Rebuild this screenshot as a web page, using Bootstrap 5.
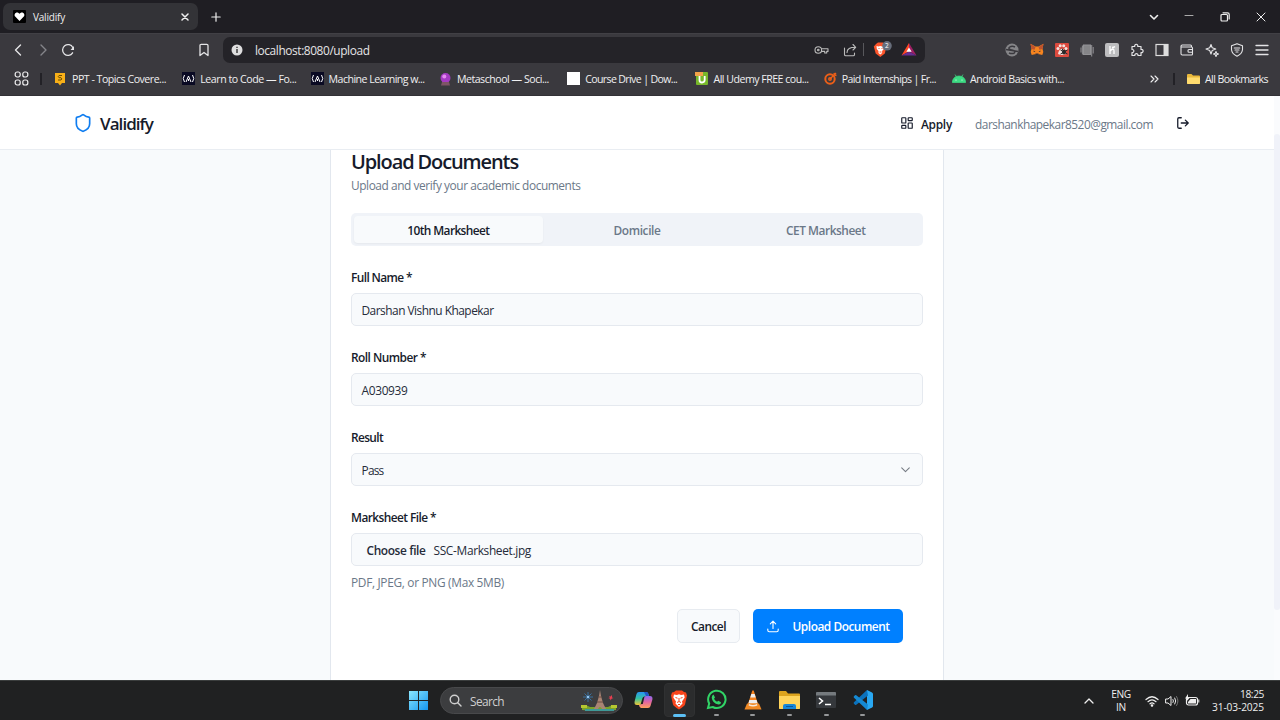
<!DOCTYPE html>
<html lang="en">
<head>
<meta charset="utf-8">
<meta name="viewport" content="width=device-width, initial-scale=1">
<title>Validify</title>
<link href="https://cdn.jsdelivr.net/npm/bootstrap@5.3.0/dist/css/bootstrap.min.css" rel="stylesheet">
<style>
body{font-family:"Open Sans","Noto Sans",sans-serif;font-size:11.9px;line-height:16px;color:#161b2b;background:#f8fafc;width:1280px;height:720px;overflow:hidden}
svg{display:block;flex:none}
.fit{white-space:nowrap;display:inline-block;flex:none}
.ln{fill:none;stroke:currentColor;stroke-linecap:round;stroke-linejoin:round}
/* browser chrome */
.tabstrip{height:33px;background:#1f1e23;color:#eee;padding-left:3px}
.btab{width:195px;height:27px;background:#333337;border-radius:7px;padding:0 9px 0 10px;font-size:10px}
.tabname{margin-left:7px}
.newtab{margin-left:13px}
.winctl{gap:26px;padding-right:14px}
.toolbar{height:32px;background:#3a393e;color:#e4e4e6;border-top:1px solid #414045}
.navset{padding-left:5px}
.navi{width:25px}
.urlbar{width:702px;height:26px;background:#242328;border-radius:7px;padding:0 8px;margin-left:13px;font-size:11.9px}
.ext{padding-right:6px}
.ext>*{width:25px;display:flex;justify-content:center;align-items:center}
.bookbar{height:31px;background:#3a393e;color:#f0f0f1;padding:0 12px 3px 14px;border-bottom:1px solid #323136;font-size:10.6px}
.bm{width:128.3px;gap:5px}
.vsep{width:2px;height:12px;background:#222126}
/* application */
.appnav{height:54px;width:1274px;background:#fff;border-bottom:1px solid #e9edf2;padding:0 84px 0 73px}
.appnav .fit{position:relative;top:1px}
.brandname{font-size:17px;font-weight:550}
.muted{color:#6b7888}
.main-area{height:530px}
.sheet{width:614px;height:530px;background:#fff;border:1px solid #e2e7ee;border-width:0 1px;margin-left:330px;padding:0 20px}
.sheet h1{font-size:20px;font-weight:600;line-height:24px;margin:0;height:26px}
.seg{height:33px;background:#f0f3f8;border-radius:5px;padding:3px;margin-top:18px;font-weight:600}
.seg>div{flex:1;height:27px;border-radius:4px;display:flex;align-items:center;justify-content:center;color:#6b7888}
.seg>.on{background:#f8fafc;color:#161b2b;box-shadow:0 1px 2px #0000000c}
.field{height:80px}
.field label{font-weight:600;display:block;height:24px}
.box{height:33px;border:1px solid #e5e9ef;border-radius:5px;background:#f8fafc;display:flex;align-items:center;padding:0 10px 0 9.5px;color:#252b39}
.act{height:34px;border-radius:5px;font-weight:600;display:flex;align-items:center;justify-content:center}
.cancel{width:63px;background:#f8fafc;border:1px solid #e7ebf0}
.upload{width:150px;background:#0080ff;color:#fff;gap:14px}
.side-track{width:6px;background:#fafbfd}
.side-thumb{height:476px;margin-top:38px;background:#f0f2f9;border-radius:3px}
/* taskbar */
.taskbar{height:40px;background:#202122;border-top:1px solid #3a3d3d;color:#eee}
.srch{width:183px;height:27px;background:#3c3d3f;border:1px solid #48494b;border-radius:14px;margin-left:12px;padding:0 4px 0 8px;color:#cfcfcf}
.apps{margin-left:11px}
.app{width:36.7px;height:39px;position:relative;display:flex;align-items:center;justify-content:center}
.app::after{content:"";position:absolute;bottom:4px;width:5px;height:2px;border-radius:2px;background:#96989a}
.app.idle::after{display:none}
.app.live::after{width:13px;height:3px;bottom:3px;background:#5cc0f5}
.app.live::before{content:"";position:absolute;left:3px;top:2px;width:31px;height:34px;background:#2b2c2d;border:1px solid #303132;border-radius:4px}
.app svg{position:relative;top:-1px}
.tray{font-size:10.2px;line-height:13px;padding-right:16px}
</style>
</head>
<body class="d-flex flex-column">

<header>
  <div class="tabstrip d-flex align-items-center">
    <div class="btab d-flex align-items-center">
      <svg width="13" height="13" viewBox="0 0 13 13"><rect width="13" height="13" rx="1" fill="#000"/><path d="M6.500 11 2.200 6.600C.5 4.600 2.800 1.600 5.200 2.800L6.500 3.800 7.800 2.800C10.200 1.600 12.500 4.600 10.800 6.600Z" fill="#fff"/></svg>
      <span class="fit tabname" data-w="32">Validify</span>
      <svg class="ms-auto ln" width="8" height="8" viewBox="0 0 8 8" stroke-width="1.5"><path d="M1 1l6 6M7 1 1 7"/></svg>
    </div>
    <svg class="newtab ln" width="10" height="10" viewBox="0 0 10 10" stroke-width="1.2"><path d="M5 .8v8.400M.8 5h8.400"/></svg>
    <div class="winctl d-flex align-items-center ms-auto">
      <svg class="ln" width="10" height="10" viewBox="0 0 10 10" stroke-width="1.600" style="margin-right:-1px"><path d="M1.500 3.500 5 7l3.500-3.500"/></svg>
      <svg class="ln" width="10" height="10" viewBox="0 0 10 10" stroke-width="1" color="#aaa"><path d="M1 3.500h8"/></svg>
      <svg class="ln" width="10" height="10" viewBox="0 0 10 10" stroke-width="1.200"><rect x="1" y="2.500" width="6.500" height="6.500" rx="1"/><path d="M3 .8h4.500Q9.200.8 9.200 2.500V7"/></svg>
      <svg class="ln" width="10" height="10" viewBox="0 0 10 10" stroke-width="1"><path d="m1 1 8 8M9 1 1 9"/></svg>
    </div>
  </div>

  <div class="toolbar d-flex align-items-center">
    <div class="navset d-flex">
      <div class="navi d-flex justify-content-center"><svg class="ln" width="12" height="14" viewBox="0 0 12 14" stroke-width="1.400"><path d="M8.500 2 3.500 7l5 5"/></svg></div>
      <div class="navi d-flex justify-content-center" style="color:#85858a"><svg class="ln" width="12" height="14" viewBox="0 0 12 14" stroke-width="1.400"><path d="m4 2 5 5-5 5"/></svg></div>
      <div class="navi d-flex justify-content-center"><svg class="ln" width="14" height="14" viewBox="0 0 14 14" stroke-width="1.300"><path d="M11.600 9.800A5.400 5.400 0 1 1 11.800 4.500"/><path d="M13 3v4H9.500Z" fill="currentColor" stroke="none"/></svg></div>
    </div>
    <svg class="ln" width="12" height="14" viewBox="0 0 12 14" stroke-width="1.300" style="margin-left:118px"><path d="M2 2.500Q2 1.300 3.200 1.300h5.600Q10 1.300 10 2.500v10L6 9.500l-4 3Z"/></svg>
    <div class="urlbar d-flex align-items-center">
      <svg width="12" height="12" viewBox="0 0 12 12"><circle cx="6" cy="6" r="5.500" fill="#dededf"/><path d="M6 5v4M6 2.700v1.300" stroke="#333" stroke-width="1.400"/></svg>
      <span class="fit" style="margin-left:12px" data-w="114.500">localhost:8080/upload</span>
      <div class="d-flex align-items-center ms-auto">
        <svg class="ln" width="15" height="10" viewBox="0 0 15 10" stroke-width="1.100" style="color:#bbb"><circle cx="4.300" cy="5" r="3.300"/><circle cx="4.300" cy="5" r=".8"/><path d="M7.500 3.800H14v2.600h-1.300V8h-2V6.400H7.500"/></svg>
        <svg class="ln" width="14" height="14" viewBox="0 0 14 14" stroke-width="1.100" style="margin-left:14px;color:#bbb"><path d="M1.500 5v6.500q0 1.300 1.300 1.300h7.400q1.300 0 1.300-1.300V10M4 9.500C4 5.500 7 4.300 12.500 4.300M10 1.500l2.700 2.800L10 7"/></svg>
        <div style="width:1px;height:13px;background:#58585c;margin:0 9px 0 6px"></div>
        <svg width="20" height="17" viewBox="0 0 20 17"><path d="m3 3 2-1.500h5L12 3l1.500 2.500-1.700 7L7.300 16 2.700 12.500.8 5.500Z" fill="#fb542b"/><path d="m3.500 5 2 .5L7.300 5l2 .5 2-.5-.5 3-1.700 2v2l-1.800 1.500L5.500 12v-2L3.800 8Z" fill="#fff"/><path d="m5.500 7 1 1m3-1-1 1m-2 3h2" stroke="#fb542b"/><circle cx="14" cy="4.800" r="4.800" fill="#676d7b"/><text x="12" y="7.300" font-size="6.500" fill="#fff">2</text></svg>
        <svg width="16" height="13" viewBox="0 0 16 13" style="margin-left:8px"><path d="M8 0 .5 12.500 8 8.500Z" fill="#ff4724"/><path d="m8 0 7.500 12.500L8 8.500Z" fill="#9e1f63"/><path d="M.5 12.500h15L8 8.500Z" fill="#662d91"/><path d="m8 4.500 2.700 4.300H5.300Z" fill="#fff"/></svg>
      </div>
    </div>
    <div class="ext d-flex ms-auto">
      <span><svg width="14" height="14" viewBox="0 0 14 14"><circle cx="7" cy="7" r="6.500" fill="#858588"/><path d="M10 4Q7 2.500 4.800 4T6 6.800l3 .8Q10.500 9 9 10.200 6.500 11.200 4 9.800M1 6.500l12 2" fill="none" stroke="#3a393e" stroke-width="1.500"/></svg></span>
      <span><svg width="14" height="13" viewBox="0 0 14 13"><path d="m.5.8 5 2.700h3l5-2.700-1 5 .8 3.200-1 3-3-.8-1.300.8H6l-1.300-.8-3 .8-1-3 .8-3.200Z" fill="#f5841f"/><path d="m.5.8 5 3.200-1 2.700-3-.8ZM13.500.8l-5 3.200 1 2.700 3-.8Z" fill="#bd532e"/><path d="m3.500 7.500 2 1.200-1.700.4Zm7 0-2 1.200 1.700.4ZM5.500 10.500h3l.3 1.500H5.200Z" fill="#33313b"/></svg></span>
      <span><svg width="14" height="14" viewBox="0 0 14 14"><rect width="14" height="14" rx="1" fill="#dc4a3e"/><g fill="#f3e3df"><circle cx="3" cy="5.500" r="1.500"/><circle cx="5.200" cy="2.700" r="1.500"/><circle cx="8.700" cy="2.700" r="1.500"/><circle cx="11" cy="5.500" r="1.500"/><path d="M7 5.500q3.500 1 4 5.500-4 2-8 0 .5-4.500 4-5.500"/></g><ellipse cx="9" cy="9" rx="2" ry="2.500" fill="#292929"/><path d="m5.500 7 7 4m0-4-7 4M7 5.500l1 2" stroke="#292929"/></svg></span>
      <span><svg width="14" height="14" viewBox="0 0 14 14" fill="none" stroke="#929295"><rect x="3.500" y="2" width="7" height="9.500" fill="#858588"/><path d="M1 4.500v5M2.400 2.500v9M11.700 2v11.500M13.200 4v6.500"/></svg></span>
      <span><svg width="14" height="14" viewBox="0 0 14 14"><rect width="14" height="14" rx="2" fill="#bdbdbf"/><path d="M5 3v8M5 8q4-4 4 0v3M7 4.500q2 0 3-1" fill="none" stroke="#fff" stroke-width="1.300"/></svg></span>
      <span><svg class="ln" width="14" height="14" viewBox="0 0 14 14" stroke-width="1.200"><path d="M2 3.500h2.700c-.5-3 3.600-3 3.100 0h3.200v3c2.800-.5 2.800 3.500 0 3v3H8c.3-2.500-3.500-2.500-3.200 0H2v-3c2.500.3 2.500-3.300 0-3Z"/></svg></span>
      <span><svg width="14" height="14" viewBox="0 0 14 14"><rect x="1" y="1.500" width="12" height="11" fill="none" stroke="#ddd" stroke-width="1.200"/><path d="M8.500 1.500H13v11H8.500Z" fill="#ddd"/></svg></span>
      <span><svg class="ln" width="14" height="14" viewBox="0 0 14 14" stroke-width="1.100"><path d="M11.500 4V3q0-1-1-1H2.300Q1 2 1 3.200v7.600Q1 12 2.300 12h9.200q1 0 1-1V5q0-1-1-1H1.200M12.500 6.500H9q-1 0-1 1v.8q0 1 1 1h3.500"/></svg></span>
      <span><svg class="ln" width="14" height="14" viewBox="0 0 14 14" stroke-width="1.100"><path d="m6 1.500 1.200 3.300L10.700 6 7.200 7.500 6 11 4.700 7.500 1 6l3.700-1.200ZM11 8.500l.7 1.800 1.800.7-1.800.7-.7 1.800-.7-1.800-1.800-.7 1.800-.7Z"/></svg></span>
      <span><svg class="ln" width="14" height="14" viewBox="0 0 14 14" stroke-width="1.100"><path d="m7 .8 5.500 2v4Q12 11 7 13.300 2 11 1.500 6.800v-4Z"/><path d="M4.300 5h5.400M5 7h4M6 9h2"/></svg></span>
      <span><svg class="ln" width="14" height="14" viewBox="0 0 14 14" stroke-width="1.300"><path d="M1 2.500h12M1 7h12M1 11.500h12"/></svg></span>
    </div>
  </div>

  <div class="bookbar d-flex align-items-center">
    <svg class="ln" width="15" height="15" viewBox="0 0 15 15" stroke-width="1.200"><rect x="1.200" y="1" width="5" height="5" rx="2"/><rect x="8.800" y="1" width="5" height="5" rx="2"/><rect x="1.200" y="9" width="5" height="5" rx="2"/><rect x="8.800" y="9" width="5" height="5" rx="2"/></svg>
    <div class="vsep" style="margin:0 12px 0 11px"></div>
    <div class="bm d-flex align-items-center"><svg width="12" height="14" viewBox="0 0 12 14"><path d="M1 1h10v10H8l-2 2.500L4 11H1Z" fill="#f8b018"/><path d="M8 3.500H5q-1.500 1.200 0 2.200h2q1.500 1.200 0 2.300H4" fill="none" stroke="#6b4a00"/></svg><span class="fit" data-w="94" style="margin-left:1px">PPT - Topics Covere...</span></div>
    <div class="bm d-flex align-items-center"><svg width="13" height="13" viewBox="0 0 13 13"><rect width="13" height="13" fill="#0a0a23"/><path d="M2.500 3Q0 6.500 2.500 10M10.500 3q2.500 3.500 0 7M4 10l2.500-6L9 10M6.500 7v2" fill="none" stroke="#fff"/></svg><span class="fit" data-w="96">Learn to Code — Fo...</span></div>
    <div class="bm d-flex align-items-center"><svg width="13" height="13" viewBox="0 0 13 13"><rect width="13" height="13" fill="#0a0a23"/><path d="M2.500 3Q0 6.500 2.500 10M10.500 3q2.500 3.500 0 7M4 10l2.500-6L9 10M6.500 7v2" fill="none" stroke="#fff"/></svg><span class="fit" data-w="96">Machine Learning w...</span></div>
    <div class="bm d-flex align-items-center"><svg width="13" height="14" viewBox="0 0 13 14"><circle cx="6.500" cy="6" r="5" fill="#a53bc4"/><circle cx="5.300" cy="4.500" r="2" fill="#e58af2"/><path d="M3 10h7l1 3.500H2Z" fill="#7e5566"/></svg><span class="fit" data-w="92">Metaschool — Soci...</span></div>
    <div class="bm d-flex align-items-center"><svg width="13" height="13"><rect width="13" height="13" fill="#fff"/></svg><span class="fit" data-w="92">Course Drive | Dow...</span></div>
    <div class="bm d-flex align-items-center"><svg width="13" height="13" viewBox="0 0 13 13"><rect x="1" width="12" height="13" rx="1" fill="#77b82a"/><path d="M4.500 4v4q0 2.500 2.500 2.500T9.700 8V4" fill="none" stroke="#fff" stroke-width="1.800"/><path d="M0 0h8v4H0Z" fill="#f3a24a"/></svg><span class="fit" data-w="95">All Udemy FREE cou...</span></div>
    <div class="bm d-flex align-items-center"><svg width="13" height="13" viewBox="0 0 13 13" fill="none" stroke="#ec5f18"><circle cx="6" cy="7" r="4.700" stroke-width="2"/><circle cx="6" cy="7" r="1.200" stroke-width="1.500"/><path d="m6 7 6-6M10 1l.5 2 2 .5" stroke-width="1.400"/></svg><span class="fit" data-w="94">Paid Internships | Fr...</span></div>
    <div class="bm d-flex align-items-center"><svg width="14" height="13" viewBox="0 0 14 13"><path d="M.3 10.500Q1 4 7 4t6.700 6.500ZM3 2.500 4.500 5M11 2.500 9.500 5" fill="#3ddc84" stroke="#3ddc84" stroke-width=".7"/><circle cx="4" cy="8" r=".6" fill="#fff"/><circle cx="10" cy="8" r=".6" fill="#fff"/></svg><span class="fit" data-w="94" style="margin-left:-1px">Android Basics with...</span></div>
    <div class="d-flex align-items-center ms-auto">
      <svg class="ln" width="9" height="8" viewBox="0 0 9 8" stroke-width="1.100"><path d="m1 1 3 3-3 3M5 1l3 3-3 3"/></svg>
      <div class="vsep" style="margin:0 12px 0 14px"></div>
      <svg width="13" height="12" viewBox="0 0 13 12"><path d="M0 2q0-1 1-1h3.500L6 2.500h6q1 0 1 1V10q0 1-1 1H1q-1 0-1-1Z" fill="#e9b83b"/><path d="M0 4.500h13V10q0 1-1 1H1q-1 0-1-1Z" fill="#ffdb6e"/></svg>
      <span class="fit" data-w="63" style="margin-left:5px">All Bookmarks</span>
    </div>
  </div>
</header>

<div class="d-flex">
  <div style="width:1274px">
    <nav class="appnav d-flex align-items-center">
      <svg class="ln" width="20" height="20" viewBox="0 0 24 24" stroke-width="2" style="color:#0f7df0"><path d="M20 13c0 5-3.500 7.500-7.660 8.950a1 1 0 0 1-.67-.01C7.500 20.500 4 18 4 13V6a1 1 0 0 1 1-1c2 0 4.500-1.200 6.240-2.720a1.170 1.170 0 0 1 1.520 0C14.510 3.810 17 5 19 5a1 1 0 0 1 1 1z"/></svg>
      <span class="fit brandname" data-w="53" style="margin-left:7px">Validify</span>
      <div class="d-flex align-items-center ms-auto">
        <svg class="ln" width="14" height="14" viewBox="0 0 24 24" stroke-width="2"><rect width="7" height="9" x="3" y="3" rx="1"/><rect width="7" height="5" x="14" y="3" rx="1"/><rect width="7" height="9" x="14" y="12" rx="1"/><rect width="7" height="5" x="3" y="16" rx="1"/></svg>
        <span class="fit fw-semibold" data-w="31" style="margin-left:7px">Apply</span>
        <span class="fit muted" data-w="178" style="margin-left:23px">darshankhapekar8520@gmail.com</span>
        <svg class="ln" width="14" height="14" viewBox="0 0 24 24" stroke-width="2.200" style="margin-left:23px"><path d="M9 21H5a2 2 0 0 1-2-2V5a2 2 0 0 1 2-2h4M16 17l5-5-5-5M21 12H9"/></svg>
      </div>
    </nav>
    <main class="main-area">
      <section class="sheet">
        <h1><span class="fit" data-w="167">Upload Documents</span></h1>
        <div class="muted" style="height:19px;padding-top:1px"><span class="fit" data-w="229.500">Upload and verify your academic documents</span></div>
        <div class="seg d-flex">
          <div class="on"><span class="fit" data-w="82">10th Marksheet</span></div>
          <div><span class="fit" data-w="47">Domicile</span></div>
          <div><span class="fit" data-w="79.500">CET Marksheet</span></div>
        </div>
        <form style="margin-top:23px">
          <div class="field"><label><span class="fit" data-w="61">Full Name *</span></label><div class="box"><span class="fit" data-w="132">Darshan Vishnu Khapekar</span></div></div>
          <div class="field"><label><span class="fit" data-w="75">Roll Number *</span></label><div class="box"><span class="fit" data-w="46">A030939</span></div></div>
          <div class="field"><label><span class="fit" data-w="32">Result</span></label><div class="box"><span class="fit" data-w="22">Pass</span><svg class="ln ms-auto" width="13" height="13" viewBox="0 0 24 24" stroke-width="2" style="color:#777c85"><path d="m5 9 7 7 7-7"/></svg></div></div>
          <div class="field"><label><span class="fit" data-w="85">Marksheet File *</span></label><div class="box"><span class="fit fw-semibold" data-w="59" style="margin-left:5px">Choose file</span><span class="fit" data-w="97.500" style="margin-left:8px">SSC-Marksheet.jpg</span></div></div>
          <div class="muted" style="height:20px;margin-top:-15px"><span class="fit" data-w="153">PDF, JPEG, or PNG (Max 5MB)</span></div>
          <div class="d-flex justify-content-end" style="padding:15px 20px 0 0;gap:13px">
            <div class="act cancel"><span class="fit" data-w="35">Cancel</span></div>
            <div class="act upload"><svg class="ln" width="12" height="13" viewBox="0 0 12 13" stroke-width="1.100"><path d="M6 8.500V1.200M3.300 3.800 6 1.200l2.700 2.600M.8 9v1.300q0 1.500 1.500 1.500h7.400q1.500 0 1.500-1.500V9"/></svg><span class="fit" data-w="97">Upload Document</span></div>
          </div>
        </form>
      </section>
    </main>
  </div>
  <div class="side-track"><div class="side-thumb"></div></div>
</div>

<footer class="taskbar d-flex align-items-center">
  <svg width="19" height="19" viewBox="0 0 19 19" style="margin-left:409px"><defs><linearGradient id="wg" x2="1" y2="1"><stop stop-color="#8ae7ff"/><stop offset="1" stop-color="#1496f0"/></linearGradient></defs><path d="M0 0h9v9H0ZM10 0h9v9h-9ZM0 10h9v9H0ZM10 10h9v9h-9Z" fill="url(#wg)"/></svg>
  <div class="srch d-flex align-items-center">
    <svg class="ln" width="13" height="13" viewBox="0 0 13 13" stroke-width="1.400"><circle cx="5.500" cy="5.500" r="4.300"/><path d="m8.800 8.800 3.200 3.200"/></svg>
    <span class="fit" data-w="34" style="margin-left:8px">Search</span>
    <svg class="ms-auto" width="38" height="22" viewBox="0 0 38 22"><path d="m8 2 0 10M3 7h10M4.500 3.500l7 7M11.500 3.500l-7 7" stroke="#39709f"/><circle cx="8" cy="7" r="1.300" fill="#92c8f5"/><path d="m29 6 1.500.5L32 5v2.500l1.500.5-2 .8-.8 1.700-.7-1.700-1.700-.8L30 7.500Z" fill="#e83e50"/><path d="M2 17q4-3 8 0h18q4-3 8 0v3q-17 2-34 0Z" fill="#7ba329"/><path d="M5 19h29v2H5Z" fill="#3f9a98"/><path d="M1 15h6v3H1ZM31 15h6v3h-6Z" fill="#b6c831"/><path d="m20 0 1 6 2 7 3 6h-4q-2-4-4 0h-4l3-6 2-7Z" fill="#a98474"/><path d="M17 12h6M18.300 7h3.400" stroke="#6d4d43"/></svg>
  </div>
  <div class="apps d-flex align-items-center">
    <div class="app idle justify-content-start" style="width:27px"><svg width="19" height="18" viewBox="0 0 19 18"><defs><linearGradient id="ca" x2="0" y2="1"><stop stop-color="#2796f3"/><stop offset=".5" stop-color="#35c3a0"/><stop offset="1" stop-color="#f1c634"/></linearGradient><linearGradient id="cb" x2="0" y2="1"><stop stop-color="#8c68ef"/><stop offset=".5" stop-color="#e265a0"/><stop offset="1" stop-color="#ffa05c"/></linearGradient></defs><path d="M5 1h7q2 0 2.500 2l.5 2h-3q-2 0-2.500 2L8 12q-.5 2-2.500 2H3Q0 14 .6 10.500L2.500 3Q3 1 5 1Z" fill="url(#ca)"/><path d="M14 17H7q-1.500 0-2-3 2.500 0 3-2l1.500-5q.5-2 2.500-2h4q3 0 2.400 3.500L16.500 15q-.5 2-2.500 2Z" fill="url(#cb)"/><path d="M8.500 7q.5-1.500 2-1.500l-1.700 7.500H6.700Z" fill="#202122"/><path d="M10 1h2q2 0 2.500 2l.5 2h-3Z" fill="#2057c9"/></svg></div>
    <div class="app live"><svg width="18" height="20" viewBox="0 0 18 20"><path d="m4 2 2-1.500h6L14 2l2 .5 1 3-2 9q-.5 1.500-6 5-5.500-3.500-6-5L1 5.500l1-3Z" fill="#f9451c"/><path d="m4 4.500 3 .5 2-.7 2 .7 3-.5.700 3-2.700 4 .5 2L9 17l-3.500-3.500.5-2-2.700-4Z" fill="#fff"/><path d="m5.500 7.500 2 .7m5-.7-2 .7M9 8v3m-2 1.500 2-1 2 1m-3 2h2" stroke="#f9451c" fill="none"/></svg></div>
    <div class="app"><svg width="21" height="21" viewBox="0 0 21 21"><path d="M2 19l1.200-4.500A8.700 8.700 0 1 1 6.700 18Z" fill="none" stroke="#31d366" stroke-width="2"/><path d="M7.500 5.500 9 8.500l-1 1.300q1 2 3 3l1.300-1 2.700 1.400q0 2.500-2.500 2.300Q6.500 14.500 5.700 8.700q0-2.500 1.800-3.200Z" fill="#31d366"/></svg></div>
    <div class="app"><svg width="18" height="20" viewBox="0 0 18 20"><path d="M8.300.5h1.400L14 14H4Z" fill="#f4821f"/><path d="m7.300 4-1 3.500h5.400l-1-3.500ZM5.400 10l-1 3.500h9.200l-1-3.500Z" fill="#eee"/><path d="M3 13.500h12l2.500 6H.5Z" fill="#f18a25"/><path d="M5 14q4 2 8 0l.4 1.500q-4.400 2-8.800 0Z" fill="#f7e9da"/></svg></div>
    <div class="app"><svg width="21" height="18" viewBox="0 0 21 18"><path d="M0 1q0-1 1-1h6l2 2.500h11q1 0 1 1V17q0 1-1 1H1q-1 0-1-1Z" fill="#dda41e"/><path d="M0 5h21v12q0 1-1 1H1q-1 0-1-1Z" fill="#ffd45b"/><path d="M4 18v-3q0-2 2-2h9q2 0 2 2v3Z" fill="#1686d8"/><path d="M7 15.500h7" stroke="#07569c"/></svg></div>
    <div class="app"><svg width="20" height="16" viewBox="0 0 20 16"><rect width="20" height="16" rx="1" fill="#35383c"/><path d="M0 1q0-1 1-1h18q1 0 1 1v2.500H0Z" fill="#757a7e"/><path d="m3 6 3.500 3L3 12M9 12.500h6" fill="none" stroke="#fff" stroke-width="1.600"/></svg></div>
    <div class="app"><svg width="20" height="20" viewBox="0 0 20 20"><path d="M14 0v20l5-2.500q1-.5 1-1.500V4q0-1-1-1.500Z" fill="#29a8f2"/><path d="M14 0 1 12.300q-.8.800 0 1.500l1 .9q.6.500 1.300 0L15 5.500Z" fill="#0b72bd"/><path d="M14 20 1 7.700q-.8-.8 0-1.500l1-.9q.6-.5 1.300 0L15 14.500Z" fill="#1589d3"/></svg></div>
  </div>
  <div class="tray d-flex align-items-center ms-auto">
    <svg class="ln" width="10" height="8" viewBox="0 0 10 8" stroke-width="1.300"><path d="m1 6 4-4 4 4"/></svg>
    <div class="text-center" style="width:28px;margin-left:13px"><span class="fit" data-w="19.500">ENG</span><br><span class="fit" data-w="10">IN</span></div>
    <svg class="ln" width="14" height="12" viewBox="0 0 14 12" stroke-width="1.200" style="margin-left:10px"><path d="M1 4.500q6-5.500 12 0M3 6.700q4-3.600 8 0M5 8.800q2-1.800 4 0"/><circle cx="7" cy="10.500" r=".7" fill="currentColor"/></svg>
    <svg class="ln" width="14" height="12" viewBox="0 0 14 12" stroke-width="1" style="margin-left:6px"><path d="M1 4h2l3-2.500v9L3 8H1ZM8 4.500q1 1.500 0 3M9.800 3q2 3 0 6"/><path d="M11.500 1.500q3 4.500 0 9" stroke="#777"/></svg>
    <svg width="15" height="13" viewBox="0 0 15 13" style="margin-left:6px"><rect x="1.500" y="3.500" width="11" height="7.500" rx="2" fill="none" stroke="#eee" stroke-width="1.200"/><path d="M5.500 5H11v4.500H3V8ZM13.300 5.500h1v3h-1ZM3 0 0 4.500h2L1 8l4-4.500H3Z" fill="#eee"/></svg>
    <div class="text-end" style="margin-left:12px"><span class="fit" data-w="24">18:25</span><br><span class="fit" data-w="52">31-03-2025</span></div>
  </div>
</footer>

<script src="https://cdn.jsdelivr.net/npm/bootstrap@5.3.0/dist/js/bootstrap.bundle.min.js"></script>
<script>
// Track each label so that it spans its intended width.
document.querySelectorAll('[data-w]').forEach(function (el) {
  var gap = parseFloat(el.dataset.w) - el.getBoundingClientRect().width;
  el.style.letterSpacing = (gap / el.textContent.length).toFixed(3) + 'px';
});
</script>
</body>
</html>
